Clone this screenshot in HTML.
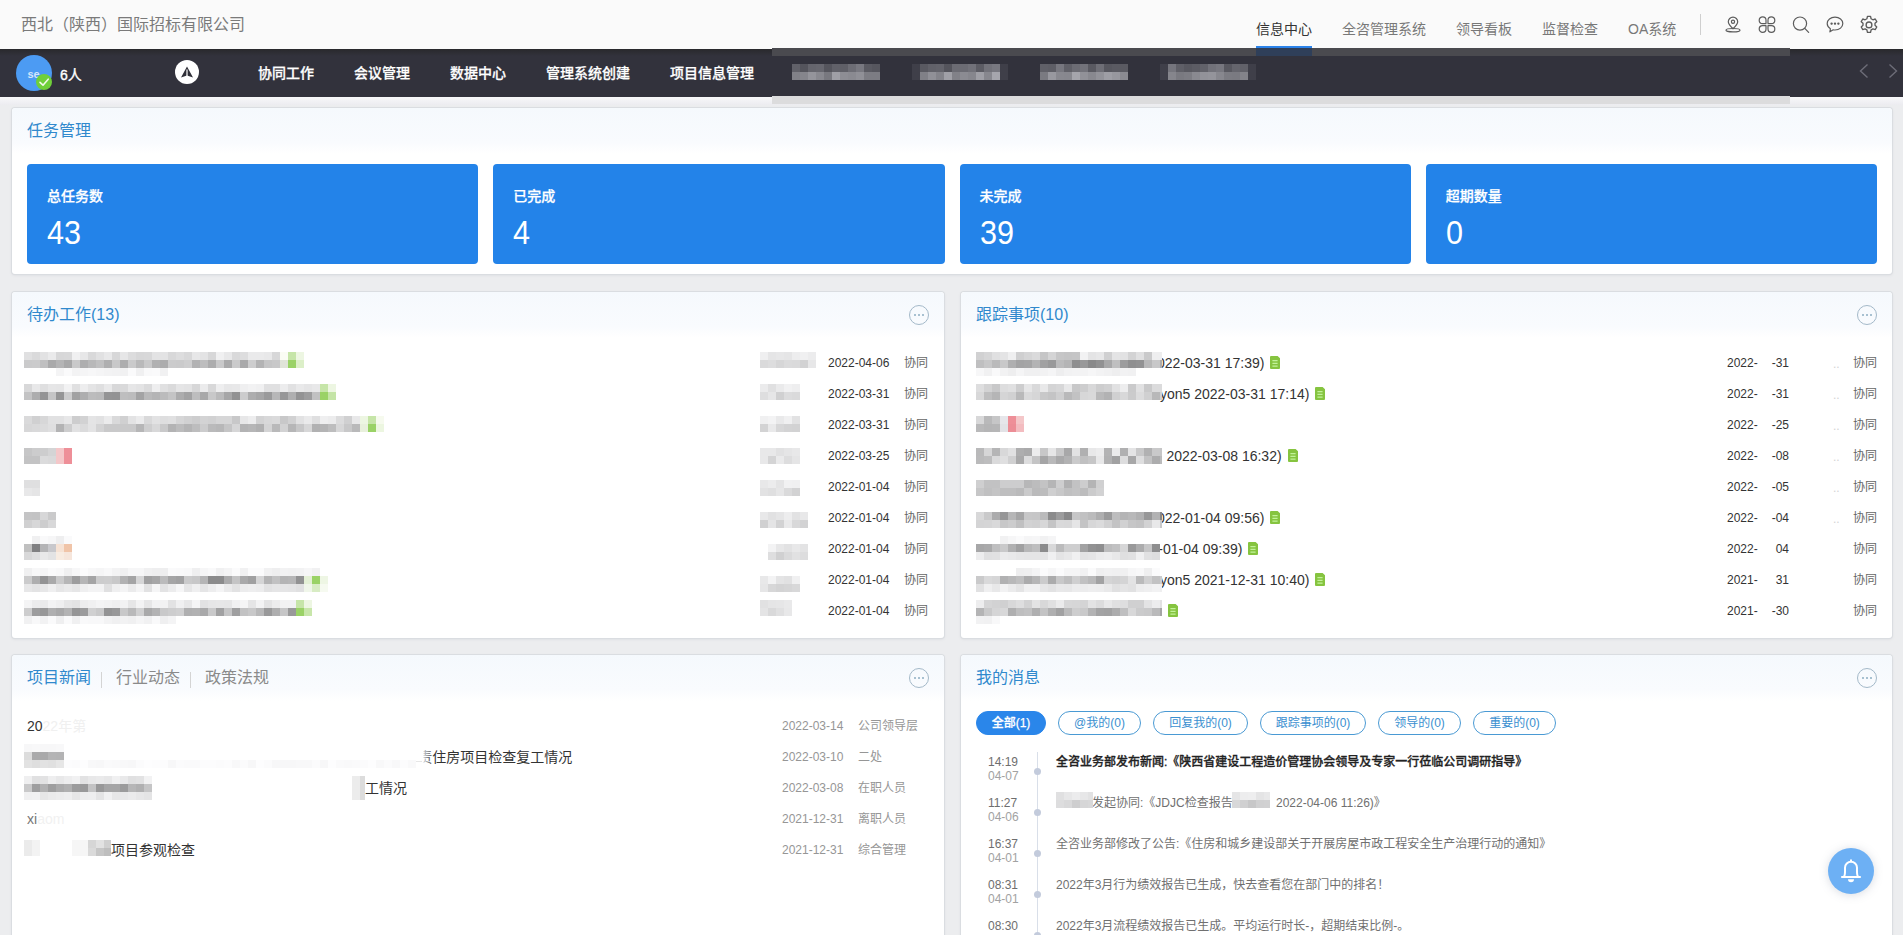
<!DOCTYPE html>
<html lang="zh-CN">
<head>
<meta charset="utf-8">
<title>信息中心</title>
<style>
*{box-sizing:border-box;margin:0;padding:0}
html,body{width:1903px;height:935px;overflow:hidden}
body{position:relative;background:#ecedef;font-family:"Liberation Sans","Noto Sans CJK SC",sans-serif;font-size:12px;color:#333}
.abs{position:absolute}
.t{position:absolute;white-space:nowrap;line-height:1}
/* header */
#hdr{position:absolute;left:0;top:0;width:1903px;height:49px;background:#fafafa}
#hdr .co{left:21px;top:17px;font-size:16px;color:#7a7a7a}
#hdr .tab{top:22px;font-size:14px;color:#787878}
#hdr .tab.on{color:#333}
#hdr .ul{position:absolute;left:1256px;top:46px;width:56px;height:2.4px;background:#2b83ea}
#hdr .dv{position:absolute;left:1700px;top:14px;width:1px;height:21px;background:#cfcfcf}
#hdr svg{position:absolute;top:15px;width:18px;height:18px;fill:none;stroke:#5c5c5c;stroke-width:1.2;stroke-linecap:round;stroke-linejoin:round}
/* nav */
#nav{position:absolute;left:0;top:49px;width:1903px;height:47.5px;background:linear-gradient(#29292c,#32323c 7px)}
#sub{position:absolute;left:0;top:96.5px;width:1903px;height:8px;background:linear-gradient(#f8f8fa,#ececf0)}
#nav .m{top:17px;font-size:14px;font-weight:500;-webkit-text-stroke:.25px #fff;color:#fff}
#ov1{position:absolute;left:772px;top:48px;width:1018px;height:8px;background:#4a4a4f}
#ov2{position:absolute;left:772px;top:96px;width:1018px;height:8px;background:#dcdcdd}
/* cards */
.card{position:absolute;background:#fff;border-radius:3px;box-shadow:0 0 0 1px #dadde1,0 1px 3px rgba(100,110,130,.18)}
.card .hd{position:absolute;left:0;top:0;right:0;height:46px;border-radius:4px 4px 0 0;background:linear-gradient(#f5f9fd,#f9fbfe 75%,#fff)}
.ttl{font-size:16px;color:#3089cd}
.more{position:absolute;width:20px;height:20px;border:1px solid #a4b9c9;border-radius:50%}
.more i{position:absolute;top:8px;width:2px;height:2px;border-radius:50%;background:#8eaec2}
.stat{position:absolute;top:164px;width:451.25px;height:100px;background:#2383e9;border-radius:4px;color:#fff}
.stat .l{left:20px;top:25px;font-size:14px;font-weight:500;-webkit-text-stroke:.25px #fff}
.stat .n{left:20px;top:54px;font-size:30px;transform:scale(1.02,1.09);transform-origin:0 55%}
.d{font-size:12px;color:#333}
.g{font-size:12px;color:#666}
.r14{font-size:14px;color:#333}
.px{position:absolute}
</style>
</head>
<body>
<div id="hdr">
  <div class="t co">西北（陕西）国际招标有限公司</div>
  <div class="t tab on" style="left:1256px">信息中心</div>
  <div class="t tab" style="left:1342px">全咨管理系统</div>
  <div class="t tab" style="left:1456px">领导看板</div>
  <div class="t tab" style="left:1542px">监督检查</div>
  <div class="t tab" style="left:1628px">OA系统</div>
  <svg style="left:1724px" viewBox="0 -0.6 18 18"><path d="M9 13.2 C6.2 10.6 4.3 8.6 4.3 6.2 A4.7 4.7 0 0 1 13.7 6.2 C13.7 8.6 11.8 10.6 9 13.2 Z"/><circle cx="9" cy="6.1" r="1.6"/><ellipse cx="9" cy="14.6" rx="7" ry="1.7"/></svg>
  <svg style="left:1758px" viewBox="0 -0.6 18 18"><path d="M8 8 H4.6 A3.4 3.4 0 1 1 8 4.6 Z"/><path d="M10 8 H13.4 A3.4 3.4 0 1 0 10 4.6 Z"/><path d="M8 10 H4.6 A3.4 3.4 0 1 0 8 13.4 Z"/><path d="M10 10 H13.4 A3.4 3.4 0 1 1 10 13.4 Z"/></svg>
  <svg style="left:1792px" viewBox="0 -0.6 18 18"><circle cx="8" cy="8" r="6.6"/><path d="M12.8 12.8 L16.6 16.8"/></svg>
  <svg style="left:1826px" viewBox="0 -0.6 18 18"><path d="M9 1.6 C4.6 1.6 1.2 4.4 1.2 8 C1.2 10.2 2.5 12.1 4.4 13.2 L3.9 16.2 L7.2 14.2 C7.8 14.3 8.4 14.4 9 14.4 C13.4 14.4 16.8 11.6 16.8 8 C16.8 4.4 13.4 1.6 9 1.6 Z"/><circle cx="5.6" cy="8" r=".6" fill="#555"/><circle cx="9" cy="8" r=".6" fill="#555"/><circle cx="12.4" cy="8" r=".6" fill="#555"/></svg>
  <svg style="left:1860px" viewBox="0.9 0.1 16.2 16.2"><circle cx="9" cy="9" r="2.6"/><path d="M7.6 1.3 h2.8 l.5 2.2 l1.6 .9 l2.1 -.7 l1.4 2.4 l-1.6 1.5 v1.8 l1.6 1.5 l-1.4 2.4 l-2.1 -.7 l-1.6 .9 l-.5 2.2 h-2.8 l-.5 -2.2 l-1.6 -.9 l-2.1 .7 l-1.4 -2.4 l1.6 -1.5 v-1.8 l-1.6 -1.5 l1.4 -2.4 l2.1 .7 l1.6 -.9 z"/></svg>
  <div class="ul"></div>
  <div class="dv"></div>
</div>
<div id="nav">
  <div class="abs" style="left:16px;top:6px;width:36px;height:36px;border-radius:50%;background:#4c9bf3"></div>
  <div class="t" style="left:27.5px;top:19.5px;font-size:11px;font-weight:bold;color:#d3e6fb">se</div>
  <div class="abs" style="left:36px;top:25px;width:16px;height:16px;border-radius:50%;background:#6fcf3a"></div>
  <svg class="abs" style="left:36px;top:25px" width="16" height="16" viewBox="0 0 16 16"><path d="M4 8.4 L7 11.2 L12.2 5.2" fill="none" stroke="#f1f9ea" stroke-width="1.6" stroke-linecap="round" stroke-linejoin="round"/></svg>
  <div class="t" style="left:60px;top:19px;font-size:14px;-webkit-text-stroke:.35px #fff;color:#fff">6人</div>
  <div class="abs" style="left:175px;top:11px;width:24px;height:24px;border-radius:50%;background:#fff"></div>
  <svg class="abs" style="left:175px;top:11px" width="24" height="24" viewBox="0 0 24 24"><path d="M12 6.6 L18 17.6 L12 15.4 L6 17.6 Z" fill="#2f2f38"/><path d="M12 9.4 L12 16.4" stroke="#fff" stroke-width="1.2"/></svg>
  <svg class="abs" style="left:1858px;top:14px" width="12" height="16" viewBox="0 0 12 16"><path d="M9.5 1.5 L2.5 8 L9.5 14.5" fill="none" stroke="#6d6d78" stroke-width="1.4"/></svg>
  <svg class="abs" style="left:1887.3px;top:14px" width="12" height="16" viewBox="0 0 12 16"><path d="M2.5 1.5 L9.5 8 L2.5 14.5" fill="none" stroke="#6d6d78" stroke-width="1.4"/></svg>
  <div class="t m" style="left:258px">协同工作</div>
  <div class="t m" style="left:354px">会议管理</div>
  <div class="t m" style="left:450px">数据中心</div>
  <div class="t m" style="left:546px">管理系统创建</div>
  <div class="t m" style="left:670px">项目信息管理</div>
</div>
<div id="sub"></div>
<div id="ov1"></div>
<div id="ov2"></div>
<div class="abs" style="left:1256px;top:48px;width:56px;height:8px;background:#2f3f59"></div>
<div class="card" style="left:12px;top:108px;width:1880px;height:166px"><div class="hd"></div></div>
<div class="t ttl" style="left:27px;top:123px">任务管理</div>
<div class="stat" style="left:27px"><div class="t l">总任务数</div><div class="t n">43</div></div>
<div class="stat" style="left:493.25px"><div class="t l">已完成</div><div class="t n">4</div></div>
<div class="stat" style="left:959.5px"><div class="t l">未完成</div><div class="t n">39</div></div>
<div class="stat" style="left:1425.75px"><div class="t l">超期数量</div><div class="t n">0</div></div>
<div class="card" style="left:12px;top:292px;width:932px;height:346px"><div class="hd"></div></div>
<div class="t ttl" style="left:27px;top:307px">待办工作(13)</div>
<div class="more" style="left:909px;top:305px"><i style="left:4px"></i><i style="left:8px"></i><i style="left:12px"></i></div>
<div class="t d" style="left:828px;top:357px">2022-04-06</div><div class="t g" style="left:904px;top:357px">协同</div>
<div class="t d" style="left:828px;top:388px">2022-03-31</div><div class="t g" style="left:904px;top:388px">协同</div>
<div class="t d" style="left:828px;top:419px">2022-03-31</div><div class="t g" style="left:904px;top:419px">协同</div>
<div class="t d" style="left:828px;top:450px">2022-03-25</div><div class="t g" style="left:904px;top:450px">协同</div>
<div class="t d" style="left:828px;top:481px">2022-01-04</div><div class="t g" style="left:904px;top:481px">协同</div>
<div class="t d" style="left:828px;top:512px">2022-01-04</div><div class="t g" style="left:904px;top:512px">协同</div>
<div class="t d" style="left:828px;top:543px">2022-01-04</div><div class="t g" style="left:904px;top:543px">协同</div>
<div class="t d" style="left:828px;top:574px">2022-01-04</div><div class="t g" style="left:904px;top:574px">协同</div>
<div class="t d" style="left:828px;top:605px">2022-01-04</div><div class="t g" style="left:904px;top:605px">协同</div>
<div class="card" style="left:961px;top:292px;width:931px;height:346px"><div class="hd"></div></div>
<div class="t ttl" style="left:976px;top:307px">跟踪事项(10)</div>
<div class="more" style="left:1857px;top:305px"><i style="left:4px"></i><i style="left:8px"></i><i style="left:12px"></i></div>
<div class="t d" style="left:1727px;top:357px">2022-</div><div class="t d" style="right:114px;top:357px">-31</div><div class="t g" style="left:1853px;top:357px">协同</div>
<div class="t d" style="left:1727px;top:388px">2022-</div><div class="t d" style="right:114px;top:388px">-31</div><div class="t g" style="left:1853px;top:388px">协同</div>
<div class="t d" style="left:1727px;top:419px">2022-</div><div class="t d" style="right:114px;top:419px">-25</div><div class="t g" style="left:1853px;top:419px">协同</div>
<div class="t d" style="left:1727px;top:450px">2022-</div><div class="t d" style="right:114px;top:450px">-08</div><div class="t g" style="left:1853px;top:450px">协同</div>
<div class="t d" style="left:1727px;top:481px">2022-</div><div class="t d" style="right:114px;top:481px">-05</div><div class="t g" style="left:1853px;top:481px">协同</div>
<div class="t d" style="left:1727px;top:512px">2022-</div><div class="t d" style="right:114px;top:512px">-04</div><div class="t g" style="left:1853px;top:512px">协同</div>
<div class="t d" style="left:1727px;top:543px">2022-</div><div class="t d" style="right:114px;top:543px">04</div><div class="t g" style="left:1853px;top:543px">协同</div>
<div class="t d" style="left:1727px;top:574px">2021-</div><div class="t d" style="right:114px;top:574px">31</div><div class="t g" style="left:1853px;top:574px">协同</div>
<div class="t d" style="left:1727px;top:605px">2021-</div><div class="t d" style="right:114px;top:605px">-30</div><div class="t g" style="left:1853px;top:605px">协同</div>
<div class="card" style="left:12px;top:655px;width:932px;height:300px"><div class="hd"></div></div>
<div class="t ttl" style="left:27px;top:670px">项目新闻</div><div class="t ttl" style="left:116px;top:670px;color:#8a8a8a">行业动态</div><div class="t ttl" style="left:205px;top:670px;color:#8a8a8a">政策法规</div>
<div class="abs" style="left:101px;top:672px;width:1px;height:16px;background:#d4d4d4"></div><div class="abs" style="left:190px;top:672px;width:1px;height:16px;background:#d4d4d4"></div>
<div class="more" style="left:909px;top:668px"><i style="left:4px"></i><i style="left:8px"></i><i style="left:12px"></i></div>
<div class="t" style="left:782px;top:720px;font-size:12px;color:#969696">2022-03-14</div><div class="t" style="left:858px;top:720px;font-size:12px;color:#969696">公司领导层</div>
<div class="t" style="left:782px;top:751px;font-size:12px;color:#969696">2022-03-10</div><div class="t" style="left:858px;top:751px;font-size:12px;color:#969696">二处</div>
<div class="t" style="left:782px;top:782px;font-size:12px;color:#969696">2022-03-08</div><div class="t" style="left:858px;top:782px;font-size:12px;color:#969696">在职人员</div>
<div class="t" style="left:782px;top:813px;font-size:12px;color:#969696">2021-12-31</div><div class="t" style="left:858px;top:813px;font-size:12px;color:#969696">离职人员</div>
<div class="t" style="left:782px;top:844px;font-size:12px;color:#969696">2021-12-31</div><div class="t" style="left:858px;top:844px;font-size:12px;color:#969696">综合管理</div>
<div class="t r14" style="left:27px;top:719px">20<span style="color:#f0f0f0">22年第</span></div>
<div class="t r14" style="left:418.3px;top:750px">责住房项目检查复工情况</div><div class="abs" style="left:410px;top:746px;width:22px;height:22px;background:linear-gradient(90deg,#fff 0 13px,rgba(255,255,255,.75) 14px,rgba(255,255,255,0) 22px)"></div><div class="abs" style="left:366px;top:761px;width:56px;height:1px;background:#e6e6e6"></div>
<div class="t r14" style="left:365px;top:781px">工情况</div>
<div class="t r14" style="left:27px;top:812px;color:#777">xi<span style="color:#f1f1f1">aom</span></div>
<div class="t r14" style="left:111px;top:843px">项目参观检查</div>
<div class="card" style="left:961px;top:655px;width:931px;height:300px"><div class="hd"></div></div>
<div class="t ttl" style="left:976px;top:670px">我的消息</div>
<div class="more" style="left:1857px;top:668px"><i style="left:4px"></i><i style="left:8px"></i><i style="left:12px"></i></div>
<div class="abs" style="left:976px;top:711px;width:70px;height:24px;border-radius:12px;background:#2a86ea;border:1px solid #2a86ea;color:#fff;font-weight:500;-webkit-text-stroke:.25px #fff;font-size:12px;line-height:22px;text-align:center;white-space:nowrap">全部(1)</div>
<div class="abs" style="left:1058px;top:711px;width:83px;height:24px;border-radius:12px;background:#fff;border:1px solid #4a9ad4;color:#3a8fd0;font-size:12px;line-height:22px;text-align:center;white-space:nowrap">@我的(0)</div>
<div class="abs" style="left:1153px;top:711px;width:95px;height:24px;border-radius:12px;background:#fff;border:1px solid #4a9ad4;color:#3a8fd0;font-size:12px;line-height:22px;text-align:center;white-space:nowrap">回复我的(0)</div>
<div class="abs" style="left:1260px;top:711px;width:106px;height:24px;border-radius:12px;background:#fff;border:1px solid #4a9ad4;color:#3a8fd0;font-size:12px;line-height:22px;text-align:center;white-space:nowrap">跟踪事项的(0)</div>
<div class="abs" style="left:1378px;top:711px;width:83px;height:24px;border-radius:12px;background:#fff;border:1px solid #4a9ad4;color:#3a8fd0;font-size:12px;line-height:22px;text-align:center;white-space:nowrap">领导的(0)</div>
<div class="abs" style="left:1473px;top:711px;width:83px;height:24px;border-radius:12px;background:#fff;border:1px solid #4a9ad4;color:#3a8fd0;font-size:12px;line-height:22px;text-align:center;white-space:nowrap">重要的(0)</div>
<div class="abs" style="left:1036.5px;top:752px;width:1.5px;height:200px;background:#d9dfe9"></div>
<div class="t" style="left:988px;top:756px;font-size:12px;color:#6e6e6e">14:19</div><div class="t" style="left:988px;top:770px;font-size:12px;color:#a2a2a2">04-07</div>
<div class="abs" style="left:1034px;top:768px;width:7px;height:7px;border-radius:50%;background:#c3cbdc"></div>
<div class="t" style="left:1056px;top:756px;font-size:12px;font-weight:500;-webkit-text-stroke:.3px #222;color:#222">全咨业务部发布新闻:《陕西省建设工程造价管理协会领导及专家一行莅临公司调研指导》</div>
<div class="t" style="left:988px;top:797px;font-size:12px;color:#6e6e6e">11:27</div><div class="t" style="left:988px;top:811px;font-size:12px;color:#a2a2a2">04-06</div>
<div class="abs" style="left:1034px;top:809px;width:7px;height:7px;border-radius:50%;background:#c3cbdc"></div>
<div class="t" style="left:1092px;top:797px;font-size:12px;color:#707070">发起协同:《JDJC检查报告</div>
<div class="t" style="left:988px;top:838px;font-size:12px;color:#6e6e6e">16:37</div><div class="t" style="left:988px;top:852px;font-size:12px;color:#a2a2a2">04-01</div>
<div class="abs" style="left:1034px;top:850px;width:7px;height:7px;border-radius:50%;background:#c3cbdc"></div>
<div class="t" style="left:1056px;top:838px;font-size:12px;color:#707070">全咨业务部修改了公告:《住房和城乡建设部关于开展房屋市政工程安全生产治理行动的通知》</div>
<div class="t" style="left:988px;top:879px;font-size:12px;color:#6e6e6e">08:31</div><div class="t" style="left:988px;top:893px;font-size:12px;color:#a2a2a2">04-01</div>
<div class="abs" style="left:1034px;top:891px;width:7px;height:7px;border-radius:50%;background:#c3cbdc"></div>
<div class="t" style="left:1056px;top:879px;font-size:12px;color:#707070">2022年3月行为绩效报告已生成，快去查看您在部门中的排名！</div>
<div class="t" style="left:988px;top:920px;font-size:12px;color:#6e6e6e">08:30</div><div class="t" style="left:988px;top:934px;font-size:12px;color:#a2a2a2">04-01</div>
<div class="abs" style="left:1034px;top:932px;width:7px;height:7px;border-radius:50%;background:#c3cbdc"></div>
<div class="t" style="left:1056px;top:920px;font-size:12px;color:#707070">2022年3月流程绩效报告已生成。平均运行时长-，超期结束比例-。</div>
<div class="t" style="left:1276px;top:797px;font-size:12px;color:#707070">2022-04-06 11:26)》</div>
<div class="abs" style="left:1828px;top:848px;width:46px;height:46px;border-radius:50%;background:#6db0f4;box-shadow:0 1px 10px rgba(120,130,150,.28)"></div>
<svg class="abs" style="left:1828px;top:848px" width="46" height="46" viewBox="0 0 46 46"><path d="M15.8 28.8 C17.4 27.2 17 24.5 17 19.8 a6 6 0 0 1 12 0 C29 24.5 28.6 27.2 30.2 28.8" fill="none" stroke="#fff" stroke-width="2"/><path d="M14 29 H32" stroke="#fff" stroke-width="2.2" stroke-linecap="round"/><path d="M22 11.4 h2 v2 h-2z" fill="#fff"/><path d="M20 31.2 a3 3 0 0 0 6 0 Z" fill="#fff"/></svg>
<div class="t r14" style="right:638.6px;top:356px">2022-03-31 17:39)</div><svg class="abs" style="left:1270px;top:356px" width="10" height="13" viewBox="0 0 10 13"><path d="M1 0 H7.6 L10 2.2 V12 a1 1 0 0 1 -1 1 H1 a1 1 0 0 1 -1 -1 V1 a1 1 0 0 1 1 -1 Z" fill="#86c440"/><path d="M2.4 4.6 H7.6 M2.4 7.4 H7.6 M2.4 10.2 H7.6" stroke="#c2f29a" stroke-width="1.2"/></svg>
<div class="t r14" style="right:593.6px;top:387px">yon5 2022-03-31 17:14)</div><svg class="abs" style="left:1315px;top:387px" width="10" height="13" viewBox="0 0 10 13"><path d="M1 0 H7.6 L10 2.2 V12 a1 1 0 0 1 -1 1 H1 a1 1 0 0 1 -1 -1 V1 a1 1 0 0 1 1 -1 Z" fill="#86c440"/><path d="M2.4 4.6 H7.6 M2.4 7.4 H7.6 M2.4 10.2 H7.6" stroke="#c2f29a" stroke-width="1.2"/></svg>
<div class="t r14" style="right:621.4px;top:449px">2022-03-08 16:32)</div><svg class="abs" style="left:1287.5px;top:449px" width="10" height="13" viewBox="0 0 10 13"><path d="M1 0 H7.6 L10 2.2 V12 a1 1 0 0 1 -1 1 H1 a1 1 0 0 1 -1 -1 V1 a1 1 0 0 1 1 -1 Z" fill="#86c440"/><path d="M2.4 4.6 H7.6 M2.4 7.4 H7.6 M2.4 10.2 H7.6" stroke="#c2f29a" stroke-width="1.2"/></svg>
<div class="t r14" style="right:638.6px;top:511px">2022-01-04 09:56)</div><svg class="abs" style="left:1270px;top:511px" width="10" height="13" viewBox="0 0 10 13"><path d="M1 0 H7.6 L10 2.2 V12 a1 1 0 0 1 -1 1 H1 a1 1 0 0 1 -1 -1 V1 a1 1 0 0 1 1 -1 Z" fill="#86c440"/><path d="M2.4 4.6 H7.6 M2.4 7.4 H7.6 M2.4 10.2 H7.6" stroke="#c2f29a" stroke-width="1.2"/></svg>
<div class="t r14" style="right:660.6px;top:542px">2022-01-04 09:39)</div><svg class="abs" style="left:1248px;top:542px" width="10" height="13" viewBox="0 0 10 13"><path d="M1 0 H7.6 L10 2.2 V12 a1 1 0 0 1 -1 1 H1 a1 1 0 0 1 -1 -1 V1 a1 1 0 0 1 1 -1 Z" fill="#86c440"/><path d="M2.4 4.6 H7.6 M2.4 7.4 H7.6 M2.4 10.2 H7.6" stroke="#c2f29a" stroke-width="1.2"/></svg>
<div class="t r14" style="right:593.6px;top:573px">yon5 2021-12-31 10:40)</div><svg class="abs" style="left:1315px;top:573px" width="10" height="13" viewBox="0 0 10 13"><path d="M1 0 H7.6 L10 2.2 V12 a1 1 0 0 1 -1 1 H1 a1 1 0 0 1 -1 -1 V1 a1 1 0 0 1 1 -1 Z" fill="#86c440"/><path d="M2.4 4.6 H7.6 M2.4 7.4 H7.6 M2.4 10.2 H7.6" stroke="#c2f29a" stroke-width="1.2"/></svg>
<svg class="abs" style="left:1168px;top:604px" width="10" height="13" viewBox="0 0 10 13"><path d="M1 0 H7.6 L10 2.2 V12 a1 1 0 0 1 -1 1 H1 a1 1 0 0 1 -1 -1 V1 a1 1 0 0 1 1 -1 Z" fill="#86c440"/><path d="M2.4 4.6 H7.6 M2.4 7.4 H7.6 M2.4 10.2 H7.6" stroke="#c2f29a" stroke-width="1.2"/></svg>
<div class="t" style="left:1833px;top:358px;font-size:12px;color:#d4d4d4">..</div><div class="t" style="left:1833px;top:389px;font-size:12px;color:#d4d4d4">..</div><div class="t" style="left:1833px;top:420px;font-size:12px;color:#d4d4d4">..</div><div class="t" style="left:1833px;top:451px;font-size:12px;color:#d4d4d4">..</div><div class="t" style="left:1833px;top:482px;font-size:12px;color:#d4d4d4">..</div><div class="t" style="left:1833px;top:513px;font-size:12px;color:#d4d4d4">..</div>
<!--MOSAIC-START-->
<div class="px" style="left:24px;top:352px;width:280px;height:8px;background:linear-gradient(90deg,#e0e0e1 0px 8px,#dadadb 8px 16px,#e2e2e3 16px 24px,#eaeaeb 24px 32px,#d7d7d8 32px 40px,#d8d8d9 40px 48px,#f0f0f1 48px 56px,#e7e7e8 56px 64px,#d9d9da 64px 72px,#e1e1e2 72px 80px,#e8e8e9 80px 88px,#d7d7d8 88px 96px,#e6e6e7 96px 104px,#dcdcdd 104px 112px,#d7d7d8 112px 120px,#d8d8d9 120px 128px,#e3e3e4 128px 136px,#e3e3e4 136px 144px,#d8d8d9 144px 152px,#ddddde 152px 160px,#d8d8d9 160px 168px,#e7e7e8 168px 176px,#e3e3e4 176px 184px,#d7d7d8 184px 192px,#f0f0f1 192px 200px,#e8e8e9 200px 208px,#d9d9da 208px 216px,#ddddde 216px 224px,#eaeaeb 224px 232px,#eaeaeb 232px 240px,#e8e8e9 240px 248px,#d7d7d8 248px 256px,#fafcf4 256px 264px,#c6e5a8 264px 272px,#edf6e2 272px 280px)"></div><div class="px" style="left:24px;top:360px;width:280px;height:8px;background:linear-gradient(90deg,#cacacb 0px 8px,#cbcbcc 8px 16px,#bfbfc0 16px 24px,#a9a9aa 24px 32px,#b4b4b5 32px 40px,#a8a8a9 40px 48px,#c9c9ca 48px 56px,#aeaeaf 56px 64px,#b8b8b9 64px 72px,#c0c0c1 72px 80px,#afafb0 80px 88px,#c8c8c9 88px 96px,#adadae 96px 104px,#cacacb 104px 112px,#b9b9ba 112px 120px,#c9c9ca 120px 128px,#b1b1b2 128px 136px,#acacad 136px 144px,#cbcbcc 144px 152px,#cacacb 152px 160px,#cececf 160px 168px,#b2b2b3 168px 176px,#bdbdbe 176px 184px,#acacad 184px 192px,#c9c9ca 192px 200px,#aaaaab 200px 208px,#cacacb 208px 216px,#a9a9aa 216px 224px,#cdcdce 224px 232px,#b3b3b4 232px 240px,#c5c5c6 240px 248px,#c8c8c9 248px 256px,#e0e4d8 256px 264px,#9ad266 264px 272px,#dcefc8 272px 280px)"></div><div class="px" style="left:56px;top:368px;width:112px;height:8px;background:linear-gradient(90deg,#f4f4f5 0px 8px,#fafafb 8px 16px,#f3f3f4 16px 24px,#f5f5f6 24px 32px,#f7f7f8 32px 40px,#f5f5f6 40px 48px,#f3f3f4 48px 56px,#f2f2f3 56px 64px,#f1f1f2 64px 72px,#fafafb 72px 80px,#f0f0f1 80px 88px,#f9f9fa 88px 96px,#fafafb 96px 104px,#f1f1f2 104px 112px)"></div>
<div class="px" style="left:24px;top:384px;width:312px;height:8px;background:linear-gradient(90deg,#d8d8d9 0px 8px,#e8e8e9 8px 16px,#dfdfe0 16px 24px,#e6e6e7 24px 32px,#e5e5e6 32px 40px,#f2f2f3 40px 48px,#e0e0e1 48px 56px,#ededee 56px 64px,#e4e4e5 64px 72px,#dfdfe0 72px 80px,#e9e9ea 80px 88px,#d8d8d9 88px 96px,#d9d9da 96px 104px,#e6e6e7 104px 112px,#e3e3e4 112px 120px,#dbdbdc 120px 128px,#eeeeef 128px 136px,#e0e0e1 136px 144px,#dadadb 144px 152px,#e5e5e6 152px 160px,#e3e3e4 160px 168px,#d7d7d8 168px 176px,#ebebec 176px 184px,#d8d8d9 184px 192px,#eeeeef 192px 200px,#e7e7e8 200px 208px,#e8e8e9 208px 216px,#efeff0 216px 224px,#f2f2f3 224px 232px,#f0f0f1 232px 240px,#e0e0e1 240px 248px,#e0e0e1 248px 256px,#ececed 256px 264px,#e1e1e2 264px 272px,#e9e9ea 272px 280px,#e5e5e6 280px 288px,#e8e8e9 288px 296px,#c6e5a8 296px 304px,#edf6e2 304px 312px)"></div><div class="px" style="left:24px;top:392px;width:312px;height:8px;background:linear-gradient(90deg,#c3c3c4 0px 8px,#adadae 8px 16px,#949495 16px 24px,#c5c5c6 24px 32px,#959596 32px 40px,#cccccd 40px 48px,#a1a1a2 48px 56px,#aeaeaf 56px 64px,#bcbcbd 64px 72px,#bababb 72px 80px,#949495 80px 88px,#939394 88px 96px,#bebebf 96px 104px,#bcbcbd 104px 112px,#a3a3a4 112px 120px,#b9b9ba 120px 128px,#b4b4b5 128px 136px,#bbbbbc 136px 144px,#c4c4c5 144px 152px,#acacad 152px 160px,#a2a2a3 160px 168px,#bdbdbe 168px 176px,#a8a8a9 176px 184px,#c8c8c9 184px 192px,#bababb 192px 200px,#a6a6a7 200px 208px,#919192 208px 216px,#cccccd 216px 224px,#adadae 224px 232px,#a6a6a7 232px 240px,#9a9a9b 240px 248px,#b7b7b8 248px 256px,#979798 256px 264px,#afafb0 264px 272px,#939394 272px 280px,#9d9d9e 280px 288px,#c1c1c2 288px 296px,#9ad266 296px 304px,#c4e4a6 304px 312px)"></div>
<div class="px" style="left:24px;top:416px;width:360px;height:8px;background:linear-gradient(90deg,#dadadb 0px 8px,#d0d0d1 8px 16px,#d7d7d8 16px 24px,#e1e1e2 24px 32px,#e1e1e2 32px 40px,#e7e7e8 40px 48px,#cdcdce 48px 56px,#d2d2d3 56px 64px,#e4e4e5 64px 72px,#e1e1e2 72px 80px,#ebebec 80px 88px,#d9d9da 88px 96px,#d0d0d1 96px 104px,#e3e3e4 104px 112px,#ebebec 112px 120px,#d9d9da 120px 128px,#e2e2e3 128px 136px,#dededf 136px 144px,#e0e0e1 144px 152px,#d6d6d7 152px 160px,#d1d1d2 160px 168px,#cdcdce 168px 176px,#d3d3d4 176px 184px,#d1d1d2 184px 192px,#d6d6d7 192px 200px,#d6d6d7 200px 208px,#c8c8c9 208px 216px,#e7e7e8 216px 224px,#ededee 224px 232px,#d3d3d4 232px 240px,#d8d8d9 240px 248px,#dadadb 248px 256px,#c8c8c9 256px 264px,#d1d1d2 264px 272px,#e2e2e3 272px 280px,#eaeaeb 280px 288px,#dfdfe0 288px 296px,#efeff0 296px 304px,#ececed 304px 312px,#dcdcdd 312px 320px,#d0d0d1 320px 328px,#e8e8e9 328px 336px,#edf6e2 336px 344px,#c6e5a8 344px 352px,#f6faee 352px 360px)"></div><div class="px" style="left:24px;top:424px;width:360px;height:8px;background:linear-gradient(90deg,#d7d7d8 0px 8px,#d9d9da 8px 16px,#dbdbdc 16px 24px,#dfdfe0 24px 32px,#b3b3b4 32px 40px,#cdcdce 40px 48px,#e1e1e2 48px 56px,#dbdbdc 56px 64px,#e3e3e4 64px 72px,#d3d3d4 72px 80px,#c9c9ca 80px 88px,#c9c9ca 88px 96px,#c9c9ca 96px 104px,#c9c9ca 104px 112px,#b6b6b7 112px 120px,#cececf 120px 128px,#d8d8d9 128px 136px,#c9c9ca 136px 144px,#b3b3b4 144px 152px,#bcbcbd 152px 160px,#b4b4b5 160px 168px,#bdbdbe 168px 176px,#cccccd 176px 184px,#bababb 184px 192px,#b7b7b8 192px 200px,#c5c5c6 200px 208px,#d6d6d7 208px 216px,#b3b3b4 216px 224px,#b6b6b7 224px 232px,#b0b0b1 232px 240px,#d4d4d5 240px 248px,#b9b9ba 248px 256px,#d2d2d3 256px 264px,#b6b6b7 264px 272px,#c7c7c8 272px 280px,#d7d7d8 280px 288px,#b1b1b2 288px 296px,#b4b4b5 296px 304px,#bdbdbe 304px 312px,#d7d7d8 312px 320px,#c8c8c9 320px 328px,#b9b9ba 328px 336px,#e8f0dc 336px 344px,#9ad266 344px 352px,#ecf6e0 352px 360px)"></div>
<div class="px" style="left:24px;top:448px;width:48px;height:8px;background:linear-gradient(90deg,#c6c6c7 0px 8px,#cccccd 8px 16px,#cdcdce 16px 24px,#d4d4d5 24px 32px,#f4c7c9 32px 40px,#ee8f98 40px 48px)"></div><div class="px" style="left:24px;top:456px;width:48px;height:8px;background:linear-gradient(90deg,#c3c3c4 0px 8px,#c3c3c4 8px 16px,#dbdbdc 16px 24px,#d9d9da 24px 32px,#f4c7c9 32px 40px,#ee8f98 40px 48px)"></div>
<div class="px" style="left:24px;top:480px;width:16px;height:8px;background:linear-gradient(90deg,#dfdfe0 0px 8px,#dfdfe0 8px 16px)"></div><div class="px" style="left:24px;top:488px;width:16px;height:8px;background:linear-gradient(90deg,#e8e8e9 0px 8px,#e5e5e6 8px 16px)"></div>
<div class="px" style="left:24px;top:512px;width:32px;height:8px;background:linear-gradient(90deg,#c4c4c5 0px 8px,#c3c3c4 8px 16px,#d7d7d8 16px 24px,#cacacb 24px 32px)"></div><div class="px" style="left:24px;top:520px;width:32px;height:8px;background:linear-gradient(90deg,#d0d0d1 0px 8px,#d7d7d8 8px 16px,#cdcdce 16px 24px,#d8d8d9 24px 32px)"></div>
<div class="px" style="left:24px;top:544px;width:48px;height:8px;background:linear-gradient(90deg,#c0c0c0 0px 8px,#808082 8px 16px,#b4b4b6 16px 24px,#c8c8cc 24px 32px,#f6e2d4 32px 40px,#f0c4a8 40px 48px)"></div><div class="px" style="left:24px;top:552px;width:48px;height:8px;background:linear-gradient(90deg,#d8d8d9 0px 8px,#dededf 8px 16px,#e8e8e9 16px 24px,#e3e3e4 24px 32px,#f8ece2 32px 40px,#f6e6dc 40px 48px)"></div><div class="px" style="left:32px;top:536px;width:40px;height:8px;background:linear-gradient(90deg,#f0f0f1 0px 8px,#f9f9fa 8px 16px,#f6f6f7 16px 24px,#eeeeef 24px 32px,#fafafb 32px 40px)"></div>
<div class="px" style="left:24px;top:576px;width:304px;height:8px;background:linear-gradient(90deg,#cbcbcc 0px 8px,#aeaeaf 8px 16px,#939394 16px 24px,#a9a9aa 24px 32px,#cacacb 32px 40px,#b6b6b7 40px 48px,#9d9d9e 48px 56px,#b5b5b6 56px 64px,#a4a4a5 64px 72px,#cccccd 72px 80px,#cdcdce 80px 88px,#c8c8c9 88px 96px,#b2b2b3 96px 104px,#a4a4a5 104px 112px,#d6d6d7 112px 120px,#a0a0a1 120px 128px,#a6a6a7 128px 136px,#bbbbbc 136px 144px,#a5a5a6 144px 152px,#a1a1a2 152px 160px,#cacacb 160px 168px,#c7c7c8 168px 176px,#b5b5b6 176px 184px,#8b8b8c 184px 192px,#8b8b8c 192px 200px,#ababac 200px 208px,#c4c4c5 208px 216px,#a9a9aa 216px 224px,#a0a0a1 224px 232px,#d5d5d6 232px 240px,#b4b4b5 240px 248px,#c1c1c2 248px 256px,#b4b4b5 256px 264px,#b6b6b7 264px 272px,#929293 272px 280px,#e4f0d6 280px 288px,#9ad266 288px 296px,#eef6e4 296px 304px)"></div><div class="px" style="left:24px;top:584px;width:304px;height:8px;background:linear-gradient(90deg,#e7e7e8 0px 8px,#e3e3e4 8px 16px,#e7e7e8 16px 24px,#efeff0 24px 32px,#e6e6e7 32px 40px,#eaeaeb 40px 48px,#e6e6e7 48px 56px,#efeff0 56px 64px,#f3f3f4 64px 72px,#f3f3f4 72px 80px,#e0e0e1 80px 88px,#efeff0 88px 96px,#f4f4f5 96px 104px,#ebebec 104px 112px,#f4f4f5 112px 120px,#e2e2e3 120px 128px,#f5f5f6 128px 136px,#e3e3e4 136px 144px,#ececed 144px 152px,#f6f6f7 152px 160px,#e6e6e7 160px 168px,#efeff0 168px 176px,#e5e5e6 176px 184px,#ededee 184px 192px,#f4f4f5 192px 200px,#eaeaeb 200px 208px,#e2e2e3 208px 216px,#ececed 216px 224px,#eeeeef 224px 232px,#ececed 232px 240px,#e2e2e3 240px 248px,#e5e5e6 248px 256px,#e5e5e6 256px 264px,#e4e4e5 264px 272px,#e0e0e1 272px 280px,#f0f6ea 280px 288px,#d8ecc4 288px 296px,#f6faf0 296px 304px)"></div><div class="px" style="left:24px;top:568px;width:296px;height:8px;background:linear-gradient(90deg,#f0f0f1 0px 8px,#f7f7f8 8px 16px,#f5f5f6 16px 24px,#fafafb 24px 32px,#f8f8f9 32px 40px,#f0f0f1 40px 48px,#f7f7f8 48px 56px,#fbfbfc 56px 64px,#f7f7f8 64px 72px,#f5f5f6 72px 80px,#f8f8f9 80px 88px,#f3f3f4 88px 96px,#f0f0f1 96px 104px,#f6f6f7 104px 112px,#f6f6f7 112px 120px,#f0f0f1 120px 128px,#eeeeef 128px 136px,#eeeeef 136px 144px,#fafafb 144px 152px,#f9f9fa 152px 160px,#f8f8f9 160px 168px,#efeff0 168px 176px,#f6f6f7 176px 184px,#f9f9fa 184px 192px,#f0f0f1 192px 200px,#f4f4f5 200px 208px,#fbfbfc 208px 216px,#f1f1f2 216px 224px,#fbfbfc 224px 232px,#fbfbfc 232px 240px,#f1f1f2 240px 248px,#eeeeef 248px 256px,#f2f2f3 256px 264px,#f1f1f2 264px 272px,#f2f2f3 272px 280px,#f6f6f7 280px 288px,#f1f1f2 288px 296px)"></div>
<div class="px" style="left:24px;top:600px;width:288px;height:8px;background:linear-gradient(90deg,#f4f4f5 0px 8px,#ececed 8px 16px,#eaeaeb 16px 24px,#f3f3f4 24px 32px,#efeff0 32px 40px,#e6e6e7 40px 48px,#e3e3e4 48px 56px,#ededee 56px 64px,#f0f0f1 64px 72px,#f4f4f5 72px 80px,#f2f2f3 80px 88px,#efeff0 88px 96px,#f2f2f3 96px 104px,#e6e6e7 104px 112px,#f3f3f4 112px 120px,#e6e6e7 120px 128px,#f2f2f3 128px 136px,#f2f2f3 136px 144px,#e2e2e3 144px 152px,#f0f0f1 152px 160px,#e7e7e8 160px 168px,#f5f5f6 168px 176px,#e2e2e3 176px 184px,#e6e6e7 184px 192px,#e7e7e8 192px 200px,#e6e6e7 200px 208px,#f1f1f2 208px 216px,#f5f5f6 216px 224px,#e5e5e6 224px 232px,#f3f3f4 232px 240px,#e3e3e4 240px 248px,#ececed 248px 256px,#f2f2f3 256px 264px,#f2f2f3 264px 272px,#c6e5a8 272px 280px,#edf6e2 280px 288px)"></div><div class="px" style="left:24px;top:608px;width:288px;height:8px;background:linear-gradient(90deg,#cdcdce 0px 8px,#9d9d9e 8px 16px,#979798 16px 24px,#afafb0 24px 32px,#a8a8a9 32px 40px,#b3b3b4 40px 48px,#959596 48px 56px,#9c9c9d 56px 64px,#d0d0d1 64px 72px,#c9c9ca 72px 80px,#939394 80px 88px,#989899 88px 96px,#c8c8c9 96px 104px,#b9b9ba 104px 112px,#d0d0d1 112px 120px,#a9a9aa 120px 128px,#b3b3b4 128px 136px,#c9c9ca 136px 144px,#cdcdce 144px 152px,#d0d0d1 152px 160px,#afafb0 160px 168px,#b1b1b2 168px 176px,#a9a9aa 176px 184px,#c9c9ca 184px 192px,#a1a1a2 192px 200px,#c5c5c6 200px 208px,#9f9fa0 208px 216px,#c2c2c3 216px 224px,#c8c8c9 224px 232px,#b8b8b9 232px 240px,#99999a 240px 248px,#aeaeaf 248px 256px,#c6c6c7 256px 264px,#99999a 264px 272px,#9ad266 272px 280px,#c8e6aa 280px 288px)"></div><div class="px" style="left:24px;top:616px;width:152px;height:8px;background:linear-gradient(90deg,#f1f1f2 0px 8px,#f8f8f9 8px 16px,#f2f2f3 16px 24px,#fafafb 24px 32px,#efeff0 32px 40px,#fafafb 40px 48px,#f0f0f1 48px 56px,#f9f9fa 56px 64px,#f8f8f9 64px 72px,#f8f8f9 72px 80px,#f3f3f4 80px 88px,#f0f0f1 88px 96px,#f2f2f3 96px 104px,#f0f0f1 104px 112px,#f5f5f6 112px 120px,#f1f1f2 120px 128px,#f9f9fa 128px 136px,#efeff0 136px 144px,#f4f4f5 144px 152px)"></div>
<div class="px" style="left:760px;top:352px;width:56px;height:8px;background:linear-gradient(90deg,#efeff0 0px 8px,#e5e5e6 8px 16px,#e7e7e8 16px 24px,#e5e5e6 24px 32px,#ededee 32px 40px,#f0f0f1 40px 48px,#ececed 48px 56px)"></div><div class="px" style="left:760px;top:360px;width:56px;height:8px;background:linear-gradient(90deg,#dadadb 0px 8px,#ddddde 8px 16px,#d6d6d7 16px 24px,#dbdbdc 24px 32px,#dadadb 32px 40px,#d2d2d3 40px 48px,#e7e7e8 48px 56px)"></div>
<div class="px" style="left:760px;top:384px;width:40px;height:8px;background:linear-gradient(90deg,#ebebec 0px 8px,#e0e0e1 8px 16px,#eaeaeb 16px 24px,#f1f1f2 24px 32px,#eeeeef 32px 40px)"></div><div class="px" style="left:760px;top:392px;width:40px;height:8px;background:linear-gradient(90deg,#dededf 0px 8px,#e6e6e7 8px 16px,#d0d0d1 16px 24px,#dcdcdd 24px 32px,#dadadb 32px 40px)"></div>
<div class="px" style="left:760px;top:416px;width:40px;height:8px;background:linear-gradient(90deg,#f0f0f1 0px 8px,#f3f3f4 8px 16px,#e9e9ea 16px 24px,#f0f0f1 24px 32px,#e2e2e3 32px 40px)"></div><div class="px" style="left:760px;top:424px;width:40px;height:8px;background:linear-gradient(90deg,#d3d3d4 0px 8px,#e9e9ea 8px 16px,#d7d7d8 16px 24px,#d3d3d4 24px 32px,#d2d2d3 32px 40px)"></div>
<div class="px" style="left:760px;top:448px;width:40px;height:8px;background:linear-gradient(90deg,#e8e8e9 0px 8px,#e8e8e9 8px 16px,#e1e1e2 16px 24px,#e5e5e6 24px 32px,#e8e8e9 32px 40px)"></div><div class="px" style="left:760px;top:456px;width:40px;height:8px;background:linear-gradient(90deg,#e8e8e9 0px 8px,#d4d4d5 8px 16px,#eaeaeb 16px 24px,#ddddde 24px 32px,#e5e5e6 32px 40px)"></div>
<div class="px" style="left:760px;top:480px;width:40px;height:8px;background:linear-gradient(90deg,#e8e8e9 0px 8px,#ececed 8px 16px,#e4e4e5 16px 24px,#f1f1f2 24px 32px,#f0f0f1 32px 40px)"></div><div class="px" style="left:760px;top:488px;width:40px;height:8px;background:linear-gradient(90deg,#e2e2e3 0px 8px,#dfdfe0 8px 16px,#e6e6e7 16px 24px,#dadadb 24px 32px,#d2d2d3 32px 40px)"></div>
<div class="px" style="left:760px;top:512px;width:48px;height:8px;background:linear-gradient(90deg,#e8e8e9 0px 8px,#e1e1e2 8px 16px,#e5e5e6 16px 24px,#ededee 24px 32px,#e2e2e3 32px 40px,#e8e8e9 40px 48px)"></div><div class="px" style="left:760px;top:520px;width:48px;height:8px;background:linear-gradient(90deg,#d0d0d1 0px 8px,#e4e4e5 8px 16px,#d2d2d3 16px 24px,#e9e9ea 24px 32px,#d8d8d9 32px 40px,#d2d2d3 40px 48px)"></div>
<div class="px" style="left:768px;top:544px;width:40px;height:8px;background:linear-gradient(90deg,#f3f3f4 0px 8px,#e7e7e8 8px 16px,#e2e2e3 16px 24px,#e8e8e9 24px 32px,#e3e3e4 32px 40px)"></div><div class="px" style="left:768px;top:552px;width:40px;height:8px;background:linear-gradient(90deg,#dededf 0px 8px,#d0d0d1 8px 16px,#dadadb 16px 24px,#e1e1e2 24px 32px,#ddddde 32px 40px)"></div>
<div class="px" style="left:760px;top:576px;width:40px;height:8px;background:linear-gradient(90deg,#e8e8e9 0px 8px,#f3f3f4 8px 16px,#e4e4e5 16px 24px,#e1e1e2 24px 32px,#f0f0f1 32px 40px)"></div><div class="px" style="left:760px;top:584px;width:40px;height:8px;background:linear-gradient(90deg,#e6e6e7 0px 8px,#d7d7d8 8px 16px,#d3d3d4 16px 24px,#d5d5d6 24px 32px,#d8d8d9 32px 40px)"></div>
<div class="px" style="left:760px;top:600px;width:32px;height:8px;background:linear-gradient(90deg,#e1e1e2 0px 8px,#e5e5e6 8px 16px,#e6e6e7 16px 24px,#e9e9ea 24px 32px)"></div><div class="px" style="left:760px;top:608px;width:32px;height:8px;background:linear-gradient(90deg,#e4e4e5 0px 8px,#d9d9da 8px 16px,#e0e0e1 16px 24px,#e8e8e9 24px 32px)"></div>
<div class="px" style="left:976px;top:352px;width:186px;height:8px;background:linear-gradient(90deg,#d1d1d2 0px 8px,#d6d6d7 8px 16px,#e0e0e1 16px 24px,#e4e4e5 24px 32px,#efeff0 32px 40px,#cfcfd0 40px 48px,#d5d5d6 48px 56px,#dadadb 56px 64px,#c5c5c6 64px 72px,#d4d4d5 72px 80px,#c6c6c7 80px 88px,#c4c4c5 88px 96px,#c5c5c6 96px 104px,#f2f2f3 104px 112px,#e4e4e5 112px 120px,#e7e7e8 120px 128px,#d0d0d1 128px 136px,#e4e4e5 136px 144px,#e2e2e3 144px 152px,#d3d3d4 152px 160px,#e0e0e1 160px 168px,#cacacb 168px 176px,#eeeeef 176px 184px,#ededee 184px 192px)"></div><div class="px" style="left:976px;top:360px;width:186px;height:8px;background:linear-gradient(90deg,#bfbfc0 0px 8px,#c7c7c8 8px 16px,#bababb 16px 24px,#c8c8c9 24px 32px,#afafb0 32px 40px,#a3a3a4 40px 48px,#a5a5a6 48px 56px,#b3b3b4 56px 64px,#a1a1a2 64px 72px,#99999a 72px 80px,#bbbbbc 80px 88px,#b4b4b5 88px 96px,#8e8e8f 96px 104px,#989899 104px 112px,#89898a 112px 120px,#919192 120px 128px,#a8a8a9 128px 136px,#bfbfc0 136px 144px,#9c9c9d 144px 152px,#8f8f90 152px 160px,#929293 160px 168px,#b8b8b9 168px 176px,#c8c8c9 176px 184px,#acacad 184px 192px)"></div><div class="px" style="left:976px;top:368px;width:160px;height:8px;background:linear-gradient(90deg,#f7f7f8 0px 8px,#f1f1f2 8px 16px,#f9f9fa 16px 24px,#f2f2f3 24px 32px,#eeeeef 32px 40px,#f5f5f6 40px 48px,#f0f0f1 48px 56px,#f0f0f1 56px 64px,#f2f2f3 64px 72px,#f5f5f6 72px 80px,#eeeeef 80px 88px,#f2f2f3 88px 96px,#f3f3f4 96px 104px,#f3f3f4 104px 112px,#f6f6f7 112px 120px,#f3f3f4 120px 128px,#f1f1f2 128px 136px,#eeeeef 136px 144px,#f2f2f3 144px 152px,#f1f1f2 152px 160px)"></div>
<div class="px" style="left:976px;top:384px;width:186px;height:8px;background:linear-gradient(90deg,#dededf 0px 8px,#d3d3d4 8px 16px,#c8c8c9 16px 24px,#ddddde 24px 32px,#e0e0e1 32px 40px,#cdcdce 40px 48px,#e6e6e7 48px 56px,#d9d9da 56px 64px,#e8e8e9 64px 72px,#d4d4d5 72px 80px,#d7d7d8 80px 88px,#e8e8e9 88px 96px,#c8c8c9 96px 104px,#cdcdce 104px 112px,#d8d8d9 112px 120px,#cdcdce 120px 128px,#d1d1d2 128px 136px,#e1e1e2 136px 144px,#ededee 144px 152px,#cacacb 152px 160px,#e1e1e2 160px 168px,#c9c9ca 168px 176px,#dbdbdc 176px 184px,#dbdbdc 184px 192px)"></div><div class="px" style="left:976px;top:392px;width:186px;height:8px;background:linear-gradient(90deg,#d8d8d9 0px 8px,#bebebf 8px 16px,#b5b5b6 16px 24px,#d5d5d6 24px 32px,#d1d1d2 32px 40px,#b9b9ba 40px 48px,#dadadb 48px 56px,#d6d6d7 56px 64px,#c8c8c9 64px 72px,#c4c4c5 72px 80px,#cfcfd0 80px 88px,#b9b9ba 88px 96px,#c2c2c3 96px 104px,#d7d7d8 104px 112px,#d9d9da 112px 120px,#b9b9ba 120px 128px,#b2b2b3 128px 136px,#d0d0d1 136px 144px,#d8d8d9 144px 152px,#cbcbcc 152px 160px,#dcdcdd 160px 168px,#d0d0d1 168px 176px,#b8b8b9 176px 184px,#d1d1d2 184px 192px)"></div>
<div class="px" style="left:976px;top:416px;width:48px;height:8px;background:linear-gradient(90deg,#d8d8d9 0px 8px,#b9b9ba 8px 16px,#c6c6c7 16px 24px,#e6e6ea 24px 32px,#ee8f98 32px 40px,#f4c7c9 40px 48px)"></div><div class="px" style="left:976px;top:424px;width:48px;height:8px;background:linear-gradient(90deg,#b9b9ba 0px 8px,#b5b5b6 8px 16px,#b6b6b7 16px 24px,#e2e2e6 24px 32px,#ec8d96 32px 40px,#f3bcc0 40px 48px)"></div>
<div class="px" style="left:976px;top:448px;width:186px;height:8px;background:linear-gradient(90deg,#b9b9ba 0px 8px,#d6d6d7 8px 16px,#b5b5b6 16px 24px,#d8d8d9 24px 32px,#e1e1e2 32px 40px,#aeaeaf 40px 48px,#aaaaab 48px 56px,#ececed 56px 64px,#c7c7c8 64px 72px,#e6e6e7 72px 80px,#c9c9ca 80px 88px,#a8a8a9 88px 96px,#e2e2e3 96px 104px,#b0b0b1 104px 112px,#e8e8e9 112px 120px,#ececed 120px 128px,#b3b3b4 128px 136px,#ebebec 136px 144px,#b0b0b1 144px 152px,#e4e4e5 152px 160px,#c8c8c9 160px 168px,#b1b1b2 168px 176px,#c9c9ca 176px 184px,#c6c6c7 184px 192px)"></div><div class="px" style="left:976px;top:456px;width:186px;height:8px;background:linear-gradient(90deg,#bababb 0px 8px,#bdbdbe 8px 16px,#dadadb 16px 24px,#dfdfe0 24px 32px,#d0d0d1 32px 40px,#a9a9aa 40px 48px,#ddddde 48px 56px,#c4c4c5 56px 64px,#a5a5a6 64px 72px,#b9b9ba 72px 80px,#a9a9aa 80px 88px,#b2b2b3 88px 96px,#cacacb 96px 104px,#c0c0c1 104px 112px,#c6c6c7 112px 120px,#e8e8e9 120px 128px,#b1b1b2 128px 136px,#a1a1a2 136px 144px,#ddddde 144px 152px,#a7a7a8 152px 160px,#dededf 160px 168px,#c2c2c3 168px 176px,#acacad 176px 184px,#bbbbbc 184px 192px)"></div>
<div class="px" style="left:976px;top:480px;width:128px;height:8px;background:linear-gradient(90deg,#cfcfd0 0px 8px,#c2c2c3 8px 16px,#c2c2c3 16px 24px,#cdcdce 24px 32px,#cdcdce 32px 40px,#cdcdce 40px 48px,#b7b7b8 48px 56px,#bcbcbd 56px 64px,#c3c3c4 64px 72px,#b5b5b6 72px 80px,#cececf 80px 88px,#b1b1b2 88px 96px,#c2c2c3 96px 104px,#cdcdce 104px 112px,#b4b4b5 112px 120px,#d0d0d1 120px 128px)"></div><div class="px" style="left:976px;top:488px;width:128px;height:8px;background:linear-gradient(90deg,#c6c6c7 0px 8px,#c0c0c1 8px 16px,#c4c4c5 16px 24px,#bebebf 24px 32px,#bebebf 32px 40px,#bababb 40px 48px,#cacacb 48px 56px,#bababb 56px 64px,#bcbcbd 64px 72px,#cfcfd0 72px 80px,#c8c8c9 80px 88px,#c0c0c1 88px 96px,#c3c3c4 96px 104px,#bcbcbd 104px 112px,#cbcbcc 112px 120px,#d2d2d3 120px 128px)"></div>
<div class="px" style="left:976px;top:512px;width:186px;height:8px;background:linear-gradient(90deg,#d8d8d9 0px 8px,#c9c9ca 8px 16px,#ababac 16px 24px,#969697 24px 32px,#b6b6b7 32px 40px,#a5a5a6 40px 48px,#c7c7c8 48px 56px,#c6c6c7 56px 64px,#bababb 64px 72px,#8b8b8c 72px 80px,#9c9c9d 80px 88px,#888889 88px 96px,#c6c6c7 96px 104px,#c1c1c2 104px 112px,#bbbbbc 112px 120px,#aeaeaf 120px 128px,#9a9a9b 128px 136px,#bdbdbe 136px 144px,#b4b4b5 144px 152px,#b8b8b9 152px 160px,#b0b0b1 160px 168px,#979798 168px 176px,#b2b2b3 176px 184px,#888889 184px 192px)"></div><div class="px" style="left:976px;top:520px;width:186px;height:8px;background:linear-gradient(90deg,#d4d4d5 0px 8px,#d5d5d6 8px 16px,#d9d9da 16px 24px,#c7c7c8 24px 32px,#cccccd 32px 40px,#c0c0c1 40px 48px,#d2d2d3 48px 56px,#d0d0d1 56px 64px,#d7d7d8 64px 72px,#c4c4c5 72px 80px,#d9d9da 80px 88px,#d8d8d9 88px 96px,#e5e5e6 96px 104px,#c4c4c5 104px 112px,#d7d7d8 112px 120px,#dbdbdc 120px 128px,#d1d1d2 128px 136px,#c3c3c4 136px 144px,#d1d1d2 144px 152px,#c6c6c7 152px 160px,#c3c3c4 160px 168px,#d2d2d3 168px 176px,#e8e8e9 176px 184px,#c9c9ca 184px 192px)"></div>
<div class="px" style="left:976px;top:544px;width:184px;height:8px;background:linear-gradient(90deg,#a7a7a8 0px 8px,#aaaaab 8px 16px,#bfbfc0 16px 24px,#c9c9ca 24px 32px,#b0b0b1 32px 40px,#a0a0a1 40px 48px,#b7b7b8 48px 56px,#bebebf 56px 64px,#8b8b8c 64px 72px,#d8d8d9 72px 80px,#bbbbbc 80px 88px,#cececf 88px 96px,#cececf 96px 104px,#a2a2a3 104px 112px,#929293 112px 120px,#8e8e8f 120px 128px,#bcbcbd 128px 136px,#c1c1c2 136px 144px,#d6d6d7 144px 152px,#99999a 152px 160px,#acacad 160px 168px,#c6c6c7 168px 176px,#8e8e8f 176px 184px)"></div><div class="px" style="left:976px;top:552px;width:184px;height:8px;background:linear-gradient(90deg,#ededee 0px 8px,#e0e0e1 8px 16px,#e1e1e2 16px 24px,#ebebec 24px 32px,#e9e9ea 32px 40px,#e6e6e7 40px 48px,#e5e5e6 48px 56px,#e5e5e6 56px 64px,#e4e4e5 64px 72px,#f0f0f1 72px 80px,#e4e4e5 80px 88px,#e8e8e9 88px 96px,#f0f0f1 96px 104px,#e3e3e4 104px 112px,#e5e5e6 112px 120px,#ebebec 120px 128px,#ededee 128px 136px,#e8e8e9 136px 144px,#dfdfe0 144px 152px,#e1e1e2 152px 160px,#f0f0f1 160px 168px,#e1e1e2 168px 176px,#dededf 176px 184px)"></div><div class="px" style="left:1000px;top:536px;width:56px;height:8px;background:linear-gradient(90deg,#f1f1f2 0px 8px,#f6f6f7 8px 16px,#fafafb 16px 24px,#f5f5f6 24px 32px,#f6f6f7 32px 40px,#f1f1f2 40px 48px,#f5f5f6 48px 56px)"></div>
<div class="px" style="left:976px;top:576px;width:186px;height:8px;background:linear-gradient(90deg,#cacacb 0px 8px,#d9d9da 8px 16px,#d6d6d7 16px 24px,#b1b1b2 24px 32px,#b8b8b9 32px 40px,#bfbfc0 40px 48px,#ababac 48px 56px,#b6b6b7 56px 64px,#cbcbcc 64px 72px,#ababac 72px 80px,#c8c8c9 80px 88px,#bebebf 88px 96px,#cfcfd0 96px 104px,#c1c1c2 104px 112px,#b9b9ba 112px 120px,#a2a2a3 120px 128px,#d4d4d5 128px 136px,#d1d1d2 136px 144px,#d4d4d5 144px 152px,#e3e3e4 152px 160px,#bababb 160px 168px,#d0d0d1 168px 176px,#c2c2c3 176px 184px,#cbcbcc 184px 192px)"></div><div class="px" style="left:976px;top:584px;width:186px;height:8px;background:linear-gradient(90deg,#e1e1e2 0px 8px,#efeff0 8px 16px,#e8e8e9 16px 24px,#f2f2f3 24px 32px,#ebebec 32px 40px,#e4e4e5 40px 48px,#f0f0f1 48px 56px,#f0f0f1 56px 64px,#e6e6e7 64px 72px,#e2e2e3 72px 80px,#e8e8e9 80px 88px,#e7e7e8 88px 96px,#ececed 96px 104px,#ececed 104px 112px,#eeeeef 112px 120px,#ededee 120px 128px,#e9e9ea 128px 136px,#e0e0e1 136px 144px,#e4e4e5 144px 152px,#e1e1e2 152px 160px,#ededee 160px 168px,#efeff0 168px 176px,#f2f2f3 176px 184px,#efeff0 184px 192px)"></div><div class="px" style="left:1016px;top:568px;width:144px;height:8px;background:linear-gradient(90deg,#eeeeef 0px 8px,#efeff0 8px 16px,#f4f4f5 16px 24px,#fbfbfc 24px 32px,#f6f6f7 32px 40px,#fbfbfc 40px 48px,#f5f5f6 48px 56px,#f5f5f6 56px 64px,#f1f1f2 64px 72px,#fafafb 72px 80px,#efeff0 80px 88px,#f1f1f2 88px 96px,#f0f0f1 96px 104px,#f0f0f1 104px 112px,#f6f6f7 112px 120px,#f8f8f9 120px 128px,#efeff0 128px 136px,#fbfbfc 136px 144px)"></div>
<div class="px" style="left:976px;top:600px;width:186px;height:8px;background:linear-gradient(90deg,#ededee 0px 8px,#d5d5d6 8px 16px,#d2d2d3 16px 24px,#d0d0d1 24px 32px,#d8d8d9 32px 40px,#dededf 40px 48px,#d2d2d3 48px 56px,#e3e3e4 56px 64px,#d8d8d9 64px 72px,#e0e0e1 72px 80px,#ebebec 80px 88px,#d7d7d8 88px 96px,#d6d6d7 96px 104px,#d4d4d5 104px 112px,#e3e3e4 112px 120px,#dcdcdd 120px 128px,#e8e8e9 128px 136px,#e0e0e1 136px 144px,#dededf 144px 152px,#d0d0d1 152px 160px,#d0d0d1 160px 168px,#e3e3e4 168px 176px,#ededee 176px 184px,#e1e1e2 184px 192px)"></div><div class="px" style="left:976px;top:608px;width:186px;height:8px;background:linear-gradient(90deg,#b4b4b5 0px 8px,#c9c9ca 8px 16px,#d5d5d6 16px 24px,#d8d8d9 24px 32px,#afafb0 32px 40px,#bebebf 40px 48px,#c1c1c2 48px 56px,#afafb0 56px 64px,#c3c3c4 64px 72px,#afafb0 72px 80px,#a1a1a2 80px 88px,#bababb 88px 96px,#cdcdce 96px 104px,#c9c9ca 104px 112px,#b3b3b4 112px 120px,#a3a3a4 120px 128px,#a1a1a2 128px 136px,#acacad 136px 144px,#bfbfc0 144px 152px,#d8d8d9 152px 160px,#cbcbcc 160px 168px,#c9c9ca 168px 176px,#bababb 176px 184px,#a5a5a6 184px 192px)"></div><div class="px" style="left:976px;top:616px;width:24px;height:8px;background:linear-gradient(90deg,#f2f2f3 0px 8px,#f1f1f2 8px 16px,#f8f8f9 16px 24px)"></div>
<div class="px" style="left:24px;top:744px;width:40px;height:8px;background:linear-gradient(90deg,#f7f7f8 0px 8px,#f8f8f9 8px 16px,#f7f7f8 16px 24px,#f7f7f8 24px 32px,#f8f8f9 32px 40px)"></div><div class="px" style="left:24px;top:752px;width:40px;height:8px;background:linear-gradient(90deg,#dcdcdc 0px 8px,#aaaaab 8px 16px,#a9a9aa 16px 24px,#b4b4b5 24px 32px,#b3b3b4 32px 40px)"></div><div class="px" style="left:24px;top:760px;width:392px;height:8px;background:linear-gradient(90deg,#e2e2e2 0px 8px,#dedede 8px 16px,#e2e2e2 16px 24px,#e0e0e0 24px 32px,#e6e6e6 32px 40px,#fcfcfd 40px 48px,#fbfbfc 48px 56px,#fdfdfe 56px 64px,#f8f8f9 64px 72px,#f7f7f8 72px 80px,#fafafb 80px 88px,#f9f9fa 88px 96px,#f8f8f9 96px 104px,#f7f7f8 104px 112px,#fbfbfc 112px 120px,#fdfdfe 120px 128px,#fcfcfd 128px 136px,#fcfcfd 136px 144px,#f7f7f8 144px 152px,#fbfbfc 152px 160px,#fafafb 160px 168px,#fafafb 168px 176px,#fcfcfd 176px 184px,#fcfcfd 184px 192px,#fbfbfc 192px 200px,#fcfcfd 200px 208px,#f8f8f9 208px 216px,#fbfbfc 216px 224px,#f7f7f8 224px 232px,#fdfdfe 232px 240px,#fbfbfc 240px 248px,#f7f7f8 248px 256px,#f7f7f8 256px 264px,#f7f7f8 264px 272px,#f8f8f9 272px 280px,#f8f8f9 280px 288px,#fbfbfc 288px 296px,#f7f7f8 296px 304px,#fdfdfe 304px 312px,#fafafb 312px 320px,#f9f9fa 320px 328px,#fafafb 328px 336px,#fbfbfc 336px 344px,#fdfdfe 344px 352px,#f8f8f9 352px 360px,#fbfbfc 360px 368px,#f8f8f9 368px 376px,#fcfcfd 376px 384px,#f9f9fa 384px 392px)"></div>
<div class="px" style="left:24px;top:776px;width:128px;height:8px;background:linear-gradient(90deg,#efeff0 0px 8px,#e0e0e1 8px 16px,#e2e2e3 16px 24px,#eeeeef 24px 32px,#e8e8e9 32px 40px,#ededee 40px 48px,#f1f1f2 48px 56px,#e2e2e3 56px 64px,#e8e8e9 64px 72px,#eaeaeb 72px 80px,#e7e7e8 80px 88px,#f0f0f1 88px 96px,#e9e9ea 96px 104px,#e0e0e1 104px 112px,#e2e2e3 112px 120px,#f2f2f3 120px 128px)"></div><div class="px" style="left:24px;top:784px;width:128px;height:8px;background:linear-gradient(90deg,#c9c9ca 0px 8px,#9e9e9f 8px 16px,#b1b1b2 16px 24px,#9e9e9f 24px 32px,#aaaaab 32px 40px,#b0b0b1 40px 48px,#9c9c9d 48px 56px,#99999a 56px 64px,#c3c3c4 64px 72px,#989899 72px 80px,#a5a5a6 80px 88px,#a5a5a6 88px 96px,#9b9b9c 96px 104px,#b6b6b7 104px 112px,#b0b0b1 112px 120px,#c5c5c6 120px 128px)"></div><div class="px" style="left:24px;top:792px;width:128px;height:8px;background:linear-gradient(90deg,#f0f0f1 0px 8px,#f1f1f2 8px 16px,#e6e6e7 16px 24px,#eaeaeb 24px 32px,#ececed 32px 40px,#eeeeef 40px 48px,#e6e6e7 48px 56px,#ededee 56px 64px,#eeeeef 64px 72px,#e4e4e5 72px 80px,#f1f1f2 80px 88px,#e7e7e8 88px 96px,#e8e8e9 96px 104px,#ebebec 104px 112px,#e7e7e8 112px 120px,#e4e4e5 120px 128px)"></div><div class="px" style="left:352px;top:776px;width:13px;height:24px;background:linear-gradient(90deg,#ececec 0 8px,#dcdcdc 8px 13px)"></div>
<div class="px" style="left:24px;top:840px;width:16px;height:16px;background:linear-gradient(90deg,#ebebeb 0 8px,#f3f3f3 8px 16px)"></div><div class="px" style="left:72px;top:840px;width:16px;height:16px;background:#f6f6f6"></div><div class="px" style="left:88px;top:840px;width:23px;height:8px;background:linear-gradient(90deg,#d6d6d6 0 8px,#e2e2e2 8px 16px,#d0d0d0 16px 24px)"></div><div class="px" style="left:88px;top:848px;width:23px;height:8px;background:linear-gradient(90deg,#dadada 0 8px,#c6c6c6 8px 16px,#bebebe 16px 24px)"></div>
<div class="px" style="left:1056px;top:792px;width:37px;height:8px;background:linear-gradient(90deg,#e0e0e1 0px 8px,#e7e7e8 8px 16px,#ececed 16px 24px,#e7e7e8 24px 32px,#e2e2e3 32px 40px)"></div><div class="px" style="left:1056px;top:800px;width:37px;height:8px;background:linear-gradient(90deg,#ddddde 0px 8px,#d9d9da 8px 16px,#cececf 16px 24px,#d6d6d7 24px 32px,#d8d8d9 32px 40px)"></div><div class="px" style="left:1232px;top:792px;width:38px;height:8px;background:linear-gradient(90deg,#e5e5e6 0px 8px,#ededee 8px 16px,#eeeeef 16px 24px,#e4e4e5 24px 32px,#e8e8e9 32px 40px)"></div><div class="px" style="left:1232px;top:800px;width:38px;height:8px;background:linear-gradient(90deg,#d8d8d9 0px 8px,#d0d0d1 8px 16px,#c7c7c8 16px 24px,#d0d0d1 24px 32px,#d1d1d2 32px 40px)"></div>
<div class="px" style="left:792px;top:64px;width:88px;height:8px;background:linear-gradient(90deg,#616169 0px 8px,#54545c 8px 16px,#65656d 16px 24px,#67676f 24px 32px,#55555d 32px 40px,#616169 40px 48px,#5f5f67 48px 56px,#6d6d75 56px 64px,#787880 64px 72px,#5a5a62 72px 80px,#56565e 80px 88px)"></div><div class="px" style="left:792px;top:72px;width:88px;height:8px;background:linear-gradient(90deg,#818188 0px 8px,#85858c 8px 16px,#94949b 16px 24px,#88888f 24px 32px,#78787f 32px 40px,#9f9fa6 40px 48px,#8d8d94 48px 56px,#8a8a91 56px 64px,#909097 64px 72px,#7c7c83 72px 80px,#7c7c83 80px 88px)"></div>
<div class="px" style="left:920px;top:64px;width:80px;height:8px;background:linear-gradient(90deg,#595961 0px 8px,#616169 8px 16px,#63636b 16px 24px,#54545c 24px 32px,#6b6b73 32px 40px,#6b6b73 40px 48px,#717179 48px 56px,#5c5c64 56px 64px,#72727a 64px 72px,#787880 72px 80px)"></div><div class="px" style="left:920px;top:72px;width:80px;height:8px;background:linear-gradient(90deg,#808087 0px 8px,#909097 8px 16px,#83838a 16px 24px,#a0a0a7 24px 32px,#818188 32px 40px,#8b8b92 40px 48px,#86868d 48px 56px,#9f9fa6 56px 64px,#87878e 64px 72px,#a6a6ad 72px 80px)"></div>
<div class="px" style="left:1040px;top:64px;width:88px;height:8px;background:linear-gradient(90deg,#606068 0px 8px,#5e5e66 8px 16px,#77777f 16px 24px,#606068 24px 32px,#6c6c74 32px 40px,#72727a 40px 48px,#595961 48px 56px,#6e6e76 56px 64px,#57575f 64px 72px,#5a5a62 72px 80px,#5a5a62 80px 88px)"></div><div class="px" style="left:1040px;top:72px;width:88px;height:8px;background:linear-gradient(90deg,#7a7a81 0px 8px,#98989f 8px 16px,#88888f 16px 24px,#87878e 24px 32px,#a5a5ac 32px 40px,#919198 40px 48px,#88888f 48px 56px,#929299 56px 64px,#9e9ea5 64px 72px,#97979e 72px 80px,#8a8a91 80px 88px)"></div>
<div class="px" style="left:1168px;top:64px;width:80px;height:8px;background:linear-gradient(90deg,#75757d 0px 8px,#5f5f67 8px 16px,#585860 16px 24px,#5c5c64 24px 32px,#62626a 32px 40px,#72727a 40px 48px,#77777f 48px 56px,#585860 56px 64px,#65656d 64px 72px,#616169 72px 80px)"></div><div class="px" style="left:1168px;top:72px;width:80px;height:8px;background:linear-gradient(90deg,#85858c 0px 8px,#797980 8px 16px,#7c7c83 16px 24px,#898990 24px 32px,#929299 32px 40px,#94949b 40px 48px,#87878e 48px 56px,#7b7b82 56px 64px,#7a7a81 64px 72px,#83838a 72px 80px)"></div>
<div class="px" style="left:912px;top:64px;width:8px;height:16px;background:#3f3f49"></div><div class="px" style="left:1000px;top:64px;width:8px;height:16px;background:#3f3f49"></div><div class="px" style="left:1160px;top:64px;width:8px;height:16px;background:#3f3f49"></div><div class="px" style="left:1248px;top:64px;width:8px;height:16px;background:#3f3f49"></div>
<!--MOSAIC-END-->
</body>
</html>
